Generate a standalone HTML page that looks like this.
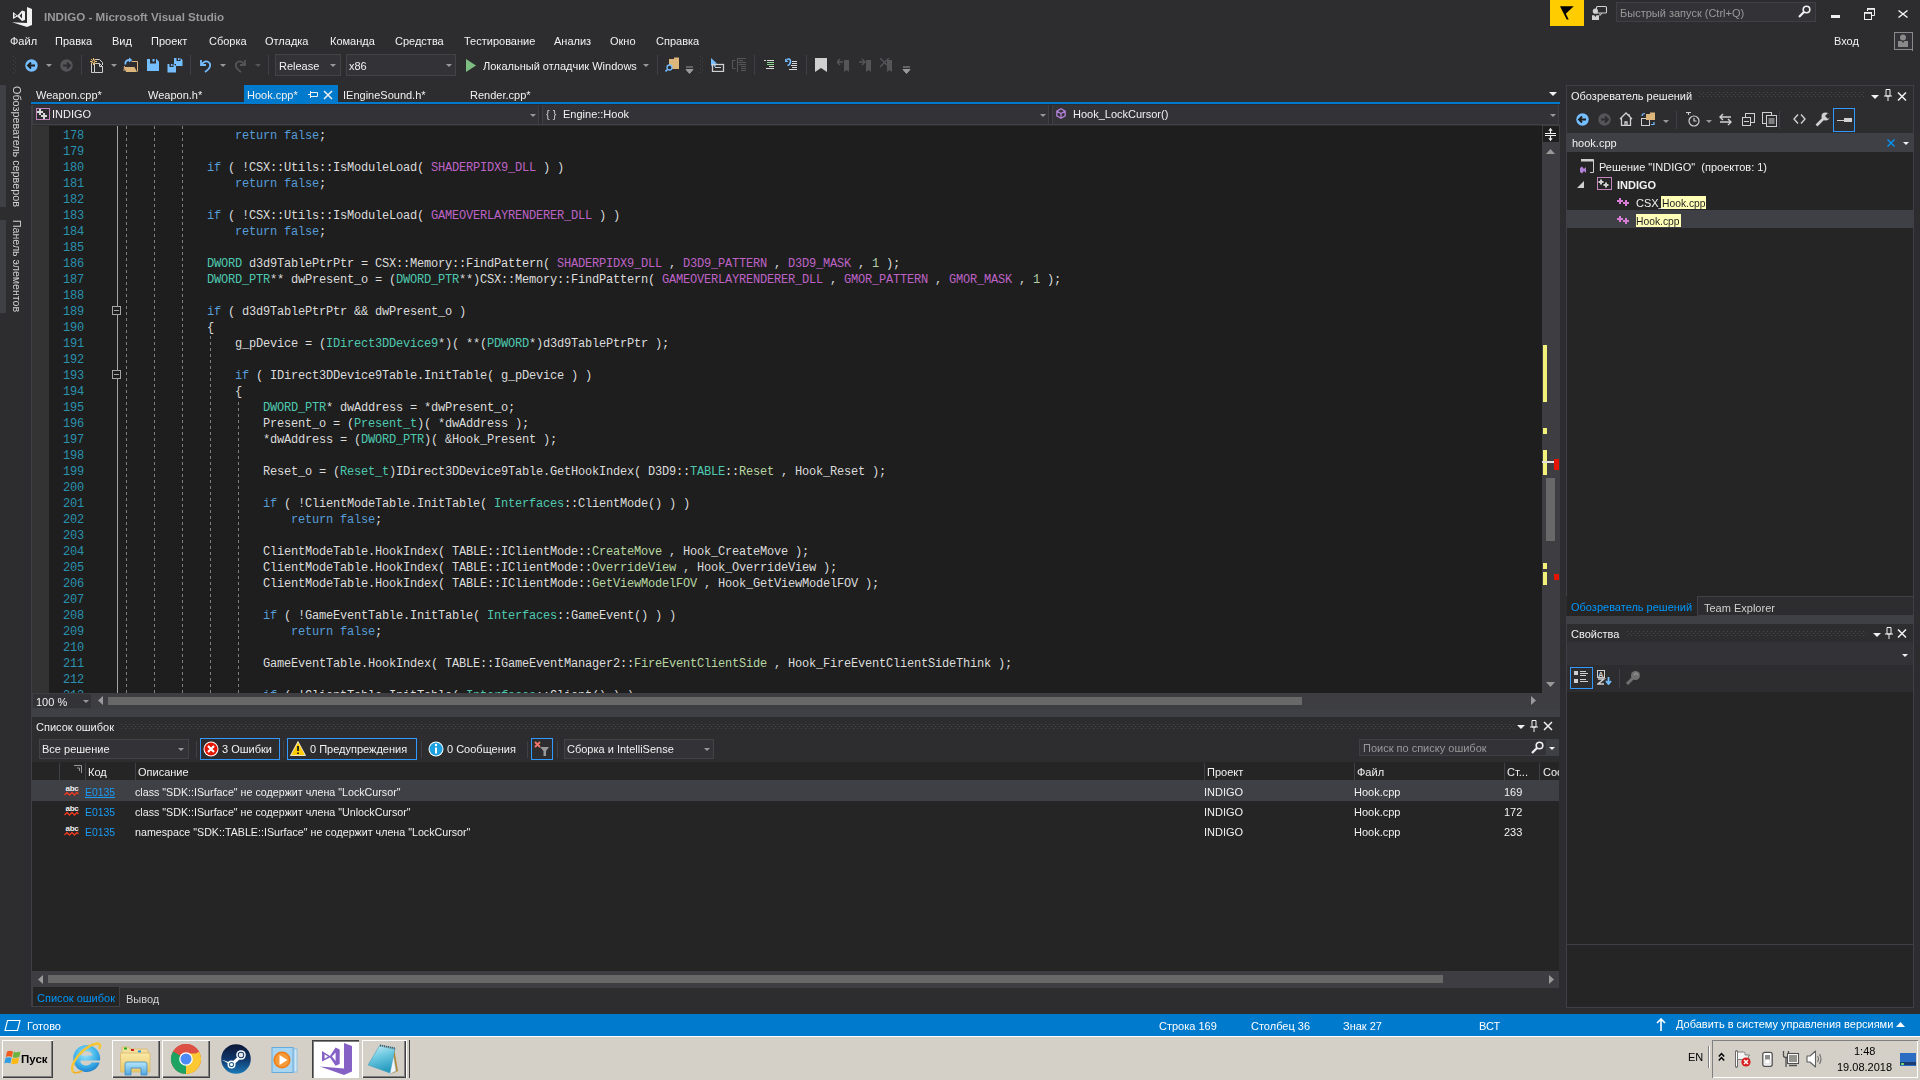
<!DOCTYPE html><html><head><meta charset="utf-8"><style>
html,body{margin:0;padding:0;width:1920px;height:1080px;overflow:hidden;background:#2D2D30;}
.a{position:absolute;}
.t{position:absolute;white-space:pre;line-height:13px;font-family:"Liberation Sans",sans-serif;will-change:transform;}
.grip{background-image:radial-gradient(circle at 1px 1px,#3C3C40 0.7px,transparent 0.8px);background-size:4px 4px;}
.code{position:absolute;left:123px;white-space:pre;font-family:"Liberation Mono",monospace;font-size:12px;letter-spacing:-0.2012px;line-height:16px;color:#DCDCDC;}
.ln{position:absolute;left:49px;width:35px;text-align:right;white-space:pre;font-family:"Liberation Mono",monospace;font-size:12px;letter-spacing:-0.2012px;line-height:16px;color:#2B91AF;}
.k{color:#569CD6}.ty{color:#4EC9B0}.m{color:#BD63C5}.en{color:#B8D7A3}.nu{color:#B5CEA8}
</style></head><body>
<svg class="a" style="left:12px;top:7px;" width="21" height="21" viewBox="0 0 21 21"><path d="M0 15.3L15 16V0L20 2V18L15 20Z" fill="#F1F1F1"/><path fill-rule="evenodd" d="M1 5L5.5 8.5L10 3.5L13 4.5V13L10 14L5.5 9.5L1 12Z M2.5 7L4.5 8.7L2.5 10Z M10 6L7.5 8.7L10 11.5Z" fill="#F1F1F1"/></svg><div class="t" style="left:44px;top:10px;color:#999999;font-size:11px;font-weight:bold;font-family:'Liberation Sans', sans-serif;font-size:11.6px;">INDIGO - Microsoft Visual Studio</div><div class="a" style="left:1550px;top:0px;width:34px;height:26px;background:#FFCC00;"></div><svg class="a" style="left:1558px;top:5px;" width="18" height="16" viewBox="0 0 18 16"><path d="M2 1.25H15.75L7.8 8.75L10.75 14.6H8.7Z" fill="#000000"/></svg><svg class="a" style="left:1591px;top:5px;" width="17" height="16" viewBox="0 0 17 16"><rect x="5.5" y="1.5" width="10" height="6.5" rx="1" fill="none" stroke="#D0D0D0" stroke-width="1.1"/><path d="M9 8V10.5L11 8" fill="#2D2D30" stroke="#D0D0D0" stroke-width="1"/><circle cx="4.4" cy="6.2" r="2.6" fill="#D0D0D0"/><path d="M1 10.2H3.3L4.4 12L5.5 10.2H8V15H1Z" fill="#D0D0D0"/></svg><div class="a" style="left:1616px;top:2px;width:200px;height:20px;background:#333337;box-shadow:inset 0 0 0 1px #3F3F46;"></div><div class="t" style="left:1620px;top:7px;color:#999999;font-size:11px;font-weight:normal;font-family:'Liberation Sans', sans-serif;">Быстрый запуск (Ctrl+Q)</div><svg class="a" style="left:1798px;top:5px;" width="13" height="13" viewBox="0 0 13 13"><circle cx="8.5" cy="4.5" r="3.3" fill="none" stroke="#F1F1F1" stroke-width="1.6"/><path d="M6.2 6.8L1 12" stroke="#F1F1F1" stroke-width="2.2"/></svg><div class="a" style="left:1831px;top:15px;width:9px;height:3px;background:#F1F1F1;"></div><svg class="a" style="left:1863px;top:8px;" width="13" height="12" viewBox="0 0 13 12"><path d="M4.5 3V0.5H11.5V7.5H8" fill="none" stroke="#F1F1F1"/><path d="M4 1H12" stroke="#F1F1F1" stroke-width="1.6"/><rect x="1.5" y="4.5" width="7" height="7" fill="none" stroke="#F1F1F1"/><path d="M1 5H9" stroke="#F1F1F1" stroke-width="1.6"/></svg><svg class="a" style="left:1898px;top:10px;" width="10" height="8" viewBox="0 0 10 8"><path d="M0.5 0.5L9.5 7.5M9.5 0.5L0.5 7.5" stroke="#F1F1F1" stroke-width="1.4"/></svg><div class="t" style="left:1834px;top:35px;color:#F1F1F1;font-size:11px;font-weight:normal;font-family:'Liberation Sans', sans-serif;">Вход</div><div class="a" style="left:1894px;top:32px;width:19px;height:18px;background:#333337;box-shadow:inset 0 0 0 1px #8A8A8A;"></div><div class="a" style="left:1912px;top:32px;width:1px;height:19px;background:#8A8A8A;"></div><svg class="a" style="left:1897px;top:34px;" width="13" height="14" viewBox="0 0 13 14"><circle cx="6" cy="3.5" r="3" fill="#8A8A8A"/><path d="M1 7H4.5L6 9L7.5 7H11V13H1Z" fill="#8A8A8A"/></svg><div class="t" style="left:10px;top:35px;color:#F1F1F1;font-size:11px;font-weight:normal;font-family:'Liberation Sans', sans-serif;">Файл</div><div class="t" style="left:55px;top:35px;color:#F1F1F1;font-size:11px;font-weight:normal;font-family:'Liberation Sans', sans-serif;">Правка</div><div class="t" style="left:112px;top:35px;color:#F1F1F1;font-size:11px;font-weight:normal;font-family:'Liberation Sans', sans-serif;">Вид</div><div class="t" style="left:151px;top:35px;color:#F1F1F1;font-size:11px;font-weight:normal;font-family:'Liberation Sans', sans-serif;">Проект</div><div class="t" style="left:209px;top:35px;color:#F1F1F1;font-size:11px;font-weight:normal;font-family:'Liberation Sans', sans-serif;">Сборка</div><div class="t" style="left:265px;top:35px;color:#F1F1F1;font-size:11px;font-weight:normal;font-family:'Liberation Sans', sans-serif;">Отладка</div><div class="t" style="left:330px;top:35px;color:#F1F1F1;font-size:11px;font-weight:normal;font-family:'Liberation Sans', sans-serif;">Команда</div><div class="t" style="left:395px;top:35px;color:#F1F1F1;font-size:11px;font-weight:normal;font-family:'Liberation Sans', sans-serif;">Средства</div><div class="t" style="left:464px;top:35px;color:#F1F1F1;font-size:11px;font-weight:normal;font-family:'Liberation Sans', sans-serif;">Тестирование</div><div class="t" style="left:554px;top:35px;color:#F1F1F1;font-size:11px;font-weight:normal;font-family:'Liberation Sans', sans-serif;">Анализ</div><div class="t" style="left:610px;top:35px;color:#F1F1F1;font-size:11px;font-weight:normal;font-family:'Liberation Sans', sans-serif;">Окно</div><div class="t" style="left:656px;top:35px;color:#F1F1F1;font-size:11px;font-weight:normal;font-family:'Liberation Sans', sans-serif;">Справка</div><svg class="a" style="left:13px;top:56px" width="4" height="17"><defs><pattern id="g1" width="4" height="4" patternUnits="userSpaceOnUse"><rect x="0" y="0" width="1" height="1" fill="#46464A"/><rect x="2" y="2" width="1" height="1" fill="#46464A"/></pattern></defs><rect width="4" height="17" fill="url(#g1)"/></svg><svg class="a" style="left:25px;top:59px;" width="13" height="13" viewBox="0 0 13 13"><circle cx="6.5" cy="6.5" r="6.2" fill="#75BEFF"/><path d="M3 6.5H10M6 3.5L3 6.5L6 9.5" stroke="#1E1E1E" stroke-width="1.8" fill="none"/></svg><svg class="a" style="left:46px;top:64px;" width="6" height="3" viewBox="0 0 6 3"><path d="M0 0H6L3.0 3Z" fill="#999999"/></svg><svg class="a" style="left:60px;top:59px;" width="13" height="13" viewBox="0 0 13 13"><circle cx="6.5" cy="6.5" r="6.2" fill="#555558"/><path d="M3 6.5H10M7 3.5L10 6.5L7 9.5" stroke="#2D2D30" stroke-width="1.8" fill="none"/></svg><div class="a" style="left:81px;top:55px;width:1px;height:20px;background:#3F3F46;"></div><svg class="a" style="left:89px;top:57px;" width="16" height="17" viewBox="0 0 16 17"><path d="M2.5 15.5V5.5M2.5 15.5H5" stroke="#D0D0D0" fill="none"/><path d="M5.5 2.5H10.5L13.5 5.5V8" stroke="#D0D0D0" fill="none"/><path d="M5.5 6.5H10.5L13.5 9.5V15.5H5.5Z" fill="#2D2D30" stroke="#D0D0D0"/><path d="M10.5 6.5V9.5H13.5" stroke="#D0D0D0" fill="none"/><path d="M4.5 1V8M1 4.5H8M2 2L7 7M7 2L2 7" stroke="#F0C070" stroke-width="1"/><circle cx="4.5" cy="4.5" r="1.4" fill="#2D2D30" stroke="#F0C070" stroke-width="0.9"/></svg><svg class="a" style="left:111px;top:64px;" width="6" height="3" viewBox="0 0 6 3"><path d="M0 0H6L3.0 3Z" fill="#999999"/></svg><svg class="a" style="left:123px;top:57px;" width="16" height="16" viewBox="0 0 16 16"><path d="M8.5 4.5H14.5V14.5" stroke="#DCB67A" fill="none"/><path d="M1 10H11.5L14 15H3Z" fill="#DCB67A"/><path d="M1.5 9L1 14" stroke="#DCB67A" stroke-width="1"/><path d="M2.5 7.5Q1.5 3 7 3" stroke="#75BEFF" stroke-width="1.8" fill="none"/><path d="M6 0.5L9.3 3L6 5.5Z" fill="#75BEFF"/></svg><svg class="a" style="left:147px;top:59px;" width="12" height="12" viewBox="0 0 12 12"><path d="M0 0H9.5L12 2.5V12H0Z" fill="#75BEFF"/><rect x="3" y="0" width="6" height="4.5" fill="#2D2D30"/><rect x="5.5" y="0" width="2" height="2.5" fill="#75BEFF"/></svg><svg class="a" style="left:167px;top:58px;" width="16" height="15" viewBox="0 0 16 15"><path d="M7 0H13.5L15.5 2V8H9V6H7Z" fill="#75BEFF"/><rect x="9.5" y="0" width="4" height="3" fill="#2D2D30"/><rect x="11" y="0" width="1.5" height="2" fill="#75BEFF"/><path d="M0.5 6H7L9 8V14.5H0.5Z" fill="#75BEFF"/><rect x="2.5" y="6" width="4" height="3" fill="#2D2D30"/><rect x="4" y="6" width="1.5" height="2" fill="#75BEFF"/></svg><div class="a" style="left:190px;top:55px;width:1px;height:20px;background:#3F3F46;"></div><svg class="a" style="left:198px;top:58px;" width="14" height="15" viewBox="0 0 14 15"><path d="M3 2V7H8" fill="none" stroke="#75BEFF" stroke-width="1.8"/><path d="M3.5 6.5Q8 1 11.5 5Q14 9 7 14" fill="none" stroke="#75BEFF" stroke-width="1.8"/></svg><svg class="a" style="left:220px;top:64px;" width="6" height="3" viewBox="0 0 6 3"><path d="M0 0H6L3.0 3Z" fill="#999999"/></svg><svg class="a" style="left:234px;top:58px;" width="14" height="15" viewBox="0 0 14 15"><path d="M11 2V7H6" fill="none" stroke="#555558" stroke-width="1.8"/><path d="M10.5 6.5Q6 1 2.5 5Q0 9 7 14" fill="none" stroke="#555558" stroke-width="1.8"/></svg><svg class="a" style="left:255px;top:64px;" width="6" height="3" viewBox="0 0 6 3"><path d="M0 0H6L3.0 3Z" fill="#555558"/></svg><div class="a" style="left:268px;top:55px;width:1px;height:20px;background:#3F3F46;"></div><div class="a" style="left:275px;top:54px;width:66px;height:22px;background:#333337;box-shadow:inset 0 0 0 1px #434346;"></div><div class="t" style="left:279px;top:60px;color:#F1F1F1;font-size:11px;font-weight:normal;font-family:'Liberation Sans', sans-serif;">Release</div><svg class="a" style="left:330px;top:64px;" width="6" height="3" viewBox="0 0 6 3"><path d="M0 0H6L3.0 3Z" fill="#999999"/></svg><div class="a" style="left:346px;top:54px;width:110px;height:22px;background:#333337;box-shadow:inset 0 0 0 1px #434346;"></div><div class="t" style="left:349px;top:60px;color:#F1F1F1;font-size:11px;font-weight:normal;font-family:'Liberation Sans', sans-serif;">x86</div><svg class="a" style="left:446px;top:64px;" width="6" height="3" viewBox="0 0 6 3"><path d="M0 0H6L3.0 3Z" fill="#999999"/></svg><svg class="a" style="left:466px;top:59px;" width="10" height="13" viewBox="0 0 10 13"><path d="M0 0L10 6.5L0 13Z" fill="#8CD790" fill-opacity="0.85"/></svg><div class="t" style="left:483px;top:60px;color:#F1F1F1;font-size:11px;font-weight:normal;font-family:'Liberation Sans', sans-serif;">Локальный отладчик Windows</div><svg class="a" style="left:643px;top:64px;" width="6" height="3" viewBox="0 0 6 3"><path d="M0 0H6L3.0 3Z" fill="#999999"/></svg><div class="a" style="left:657px;top:55px;width:1px;height:20px;background:#3F3F46;"></div><svg class="a" style="left:665px;top:57px;" width="15" height="16" viewBox="0 0 15 16"><path d="M4 2H9V0.5H14V12H4Z" fill="#DCB67A"/><circle cx="4.5" cy="10.5" r="2.5" fill="#2D2D30" stroke="#75BEFF" stroke-width="1.3"/><path d="M2.5 12.5L0.5 14.5" stroke="#75BEFF" stroke-width="1.6"/></svg><svg class="a" style="left:685px;top:66px;" width="9" height="9" viewBox="0 0 9 9"><path d="M1 1H8M1 3.5H8L4.5 7.5Z" stroke="#999999" fill="#999999" stroke-width="1"/></svg><svg class="a" style="left:700px;top:56px" width="4" height="17"><defs><pattern id="g2" width="4" height="4" patternUnits="userSpaceOnUse"><rect x="0" y="0" width="1" height="1" fill="#46464A"/><rect x="2" y="2" width="1" height="1" fill="#46464A"/></pattern></defs><rect width="4" height="17" fill="url(#g2)"/></svg><svg class="a" style="left:711px;top:58px;" width="14" height="14" viewBox="0 0 14 14"><path d="M0 0V8L2 6.5L3.5 9L5 8.2L3.8 5.8H6.2Z" fill="#75BEFF"/><rect x="1.5" y="6.5" width="11" height="7" fill="none" stroke="#D0D0D0" stroke-width="1.3"/><path d="M4 9.5H10" stroke="#D0D0D0"/></svg><svg class="a" style="left:732px;top:58px;" width="15" height="14" viewBox="0 0 15 14"><path d="M0 2.5H3.5M0.5 2V10.5H3.5M5.5 0V14M5 0.5H14M7 2.5H11M6 4.5H14M7 6.5H14M9 8.5H14M9 10.5H14M9 12.5H14" stroke="#555558" fill="none"/></svg><div class="a" style="left:754px;top:55px;width:1px;height:20px;background:#3F3F46;"></div><svg class="a" style="left:764px;top:60px;" width="11" height="9" viewBox="0 0 11 9"><path d="M0 0.5H2M3 0.5H10M5 6.5H10M2 8.5H10" stroke="#D8D8D8"/><path d="M3 2.5H10M3 4.5H10" stroke="#8CD790"/></svg><svg class="a" style="left:785px;top:58px;" width="13" height="12" viewBox="0 0 13 12"><path d="M1.5 1.5Q5.5 0 5.5 3.5Q5.5 6.5 2.5 7.5" stroke="#75BEFF" stroke-width="1.6" fill="none"/><path d="M0 0.5V4H3.5Z" fill="#75BEFF"/><path d="M7 3.5H12M7 5.5H12M6 7.5H12M7 9.5H12M4 11.5H12" stroke="#D8D8D8"/></svg><div class="a" style="left:806px;top:55px;width:1px;height:20px;background:#3F3F46;"></div><svg class="a" style="left:815px;top:58px;" width="12" height="14" viewBox="0 0 12 14"><path d="M0 0H12V14L6 10L0 14Z" fill="#D0D0D0"/></svg><svg class="a" style="left:837px;top:58px;" width="13" height="14" viewBox="0 0 13 14"><path d="M7 2H12V14L9.5 12L7 14Z" fill="#555558"/><path d="M0 4H6M3 1L0 4L3 7" stroke="#555558" stroke-width="1.4" fill="none"/></svg><svg class="a" style="left:859px;top:58px;" width="13" height="14" viewBox="0 0 13 14"><path d="M7 2H12V14L9.5 12L7 14Z" fill="#555558"/><path d="M0 4H6M3 1L6 4L3 7" stroke="#555558" stroke-width="1.4" fill="none"/></svg><svg class="a" style="left:880px;top:58px;" width="14" height="14" viewBox="0 0 14 14"><path d="M7 2H12V14L9.5 12L7 14Z" fill="#555558"/><path d="M0 0L9 9M9 0L0 9" stroke="#555558" stroke-width="1.4"/></svg><svg class="a" style="left:902px;top:66px;" width="9" height="9" viewBox="0 0 9 9"><path d="M1 1H8M1 3.5H8L4.5 7.5Z" stroke="#999999" fill="#999999" stroke-width="1"/></svg><div class="a" style="left:0px;top:85px;width:6px;height:122px;background:#3F3F46;"></div><div class="a" style="left:0px;top:220px;width:6px;height:93px;background:#3F3F46;"></div><div class="t" style="left:10px;top:86px;color:#D0D0D0;font-size:10.8px;writing-mode:vertical-rl;line-height:13px">Обозреватель серверов</div><div class="t" style="left:10px;top:220px;color:#D0D0D0;font-size:10.6px;writing-mode:vertical-rl;line-height:13px">Панель элементов</div><div class="a" style="left:31px;top:102px;width:1529px;height:2px;background:#007ACC;"></div><div class="t" style="left:36px;top:89px;color:#F1F1F1;font-size:11px;font-weight:normal;font-family:'Liberation Sans', sans-serif;">Weapon.cpp*</div><div class="t" style="left:148px;top:89px;color:#F1F1F1;font-size:11px;font-weight:normal;font-family:'Liberation Sans', sans-serif;">Weapon.h*</div><div class="a" style="left:244px;top:85px;width:94px;height:17px;background:#007ACC;"></div><div class="t" style="left:247px;top:89px;color:#F1F1F1;font-size:11px;font-weight:normal;font-family:'Liberation Sans', sans-serif;">Hook.cpp*</div><svg class="a" style="left:308px;top:91px;" width="10" height="7" viewBox="0 0 10 7"><path d="M0 3.5H2.5M2.5 0V7M2.5 1.5H9.5V5.5H2.5" stroke="#F1F1F1" fill="none"/></svg><svg class="a" style="left:323px;top:90px;" width="10" height="10" viewBox="0 0 10 10"><path d="M1 1L9 9M9 1L1 9" stroke="#F1F1F1" stroke-width="1.5"/></svg><div class="t" style="left:343px;top:89px;color:#F1F1F1;font-size:11px;font-weight:normal;font-family:'Liberation Sans', sans-serif;">IEngineSound.h*</div><div class="t" style="left:470px;top:89px;color:#F1F1F1;font-size:11px;font-weight:normal;font-family:'Liberation Sans', sans-serif;">Render.cpp*</div><svg class="a" style="left:1549px;top:92px;" width="8" height="4" viewBox="0 0 8 4"><path d="M0 0H8L4.0 4Z" fill="#F1F1F1"/></svg><div class="a" style="left:31px;top:104px;width:1529px;height:21px;background:#2D2D30;"></div><div class="a" style="left:33px;top:105px;width:506px;height:19px;background:#333337;"></div><div class="a" style="left:538px;top:105px;width:1px;height:19px;background:#3F3F46;"></div><div class="a" style="left:542px;top:105px;width:507px;height:19px;background:#333337;"></div><div class="a" style="left:542px;top:105px;width:1px;height:19px;background:#3F3F46;"></div><div class="a" style="left:1048px;top:105px;width:1px;height:19px;background:#3F3F46;"></div><div class="a" style="left:1052px;top:105px;width:507px;height:19px;background:#333337;"></div><div class="a" style="left:1052px;top:105px;width:1px;height:19px;background:#3F3F46;"></div><div class="a" style="left:1558px;top:105px;width:1px;height:19px;background:#3F3F46;"></div><div class="a" style="left:33px;top:124px;width:1526px;height:1px;background:#3F3F46;"></div><svg class="a" style="left:36px;top:108px;" width="14" height="12" viewBox="0 0 14 12"><rect x="0.5" y="0.5" width="13" height="11" fill="#2D2D30" stroke="#C586C0"/><path d="M4 1V7M1 4H7M8 5V11M5 8H11" stroke="#D8D8D8" stroke-width="2"/></svg><div class="t" style="left:52px;top:108px;color:#F1F1F1;font-size:11px;font-weight:normal;font-family:'Liberation Sans', sans-serif;">INDIGO</div><svg class="a" style="left:530px;top:114px;" width="6" height="3" viewBox="0 0 6 3"><path d="M0 0H6L3.0 3Z" fill="#999999"/></svg><div class="t" style="left:546px;top:108px;color:#D0D0D0;font-size:11px;font-weight:normal;font-family:'Liberation Sans', sans-serif;">{ }</div><div class="t" style="left:563px;top:108px;color:#F1F1F1;font-size:11px;font-weight:normal;font-family:'Liberation Sans', sans-serif;">Engine::Hook</div><svg class="a" style="left:1040px;top:114px;" width="6" height="3" viewBox="0 0 6 3"><path d="M0 0H6L3.0 3Z" fill="#999999"/></svg><svg class="a" style="left:1056px;top:108px;" width="10" height="11" viewBox="0 0 10 11"><path d="M5 0.8L9.2 3.1V7.9L5 10.2L0.8 7.9V3.1Z M0.8 3.1L5 5.5L9.2 3.1M5 5.5V10.2" fill="none" stroke="#B180D7" stroke-width="1.3"/></svg><div class="t" style="left:1073px;top:108px;color:#F1F1F1;font-size:11px;font-weight:normal;font-family:'Liberation Sans', sans-serif;">Hook_LockCursor()</div><svg class="a" style="left:1550px;top:114px;" width="6" height="3" viewBox="0 0 6 3"><path d="M0 0H6L3.0 3Z" fill="#999999"/></svg><div class="a" style="left:31px;top:125px;width:1511px;height:568px;background:#1E1E1E;"></div><div class="a" style="left:31px;top:125px;width:18px;height:568px;background:#333333;"></div><div class="a" style="left:31px;top:105px;width:2px;height:20px;background:#3F3F46;"></div><div class="a" style="left:117px;top:125px;width:1px;height:568px;background:#A5A5A5;"></div><div class="a" style="left:31px;top:125px;width:1511px;height:568px;overflow:hidden"><div class="a" style="left:95px;top:0px;width:1px;height:568px;background-image:linear-gradient(to bottom,#808080 0 3px,transparent 3px 6px);background-size:1px 6px;background-position:0 1px"></div><div class="a" style="left:123px;top:0px;width:1px;height:568px;background-image:linear-gradient(to bottom,#808080 0 3px,transparent 3px 6px);background-size:1px 6px;background-position:0 1px"></div><div class="a" style="left:151px;top:0px;width:1px;height:568px;background-image:linear-gradient(to bottom,#808080 0 3px,transparent 3px 6px);background-size:1px 6px;background-position:0 1px"></div><div class="a" style="left:179px;top:211px;width:1px;height:357px;background-image:linear-gradient(to bottom,#808080 0 3px,transparent 3px 6px);background-size:1px 6px;background-position:0 0px"></div><div class="a" style="left:207px;top:275px;width:1px;height:293px;background-image:linear-gradient(to bottom,#808080 0 3px,transparent 3px 6px);background-size:1px 6px;background-position:0 2px"></div><div class="ln" style="left:18px;top:3px">178</div><div class="code" style="left:204px;top:3px"><span class="k">return</span> <span class="k">false</span>;</div><div class="ln" style="left:18px;top:19px">179</div><div class="ln" style="left:18px;top:35px">180</div><div class="code" style="left:176px;top:35px"><span class="k">if</span> ( !CSX::Utils::IsModuleLoad( <span class="m">SHADERPIDX9_DLL</span> ) )</div><div class="ln" style="left:18px;top:51px">181</div><div class="code" style="left:204px;top:51px"><span class="k">return</span> <span class="k">false</span>;</div><div class="ln" style="left:18px;top:67px">182</div><div class="ln" style="left:18px;top:83px">183</div><div class="code" style="left:176px;top:83px"><span class="k">if</span> ( !CSX::Utils::IsModuleLoad( <span class="m">GAMEOVERLAYRENDERER_DLL</span> ) )</div><div class="ln" style="left:18px;top:99px">184</div><div class="code" style="left:204px;top:99px"><span class="k">return</span> <span class="k">false</span>;</div><div class="ln" style="left:18px;top:115px">185</div><div class="ln" style="left:18px;top:131px">186</div><div class="code" style="left:176px;top:131px"><span class="ty">DWORD</span> d3d9TablePtrPtr = CSX::Memory::FindPattern( <span class="m">SHADERPIDX9_DLL</span> , <span class="m">D3D9_PATTERN</span> , <span class="m">D3D9_MASK</span> , <span class="nu">1</span> );</div><div class="ln" style="left:18px;top:147px">187</div><div class="code" style="left:176px;top:147px"><span class="ty">DWORD_PTR</span>** dwPresent_o = (<span class="ty">DWORD_PTR</span>**)CSX::Memory::FindPattern( <span class="m">GAMEOVERLAYRENDERER_DLL</span> , <span class="m">GMOR_PATTERN</span> , <span class="m">GMOR_MASK</span> , <span class="nu">1</span> );</div><div class="ln" style="left:18px;top:163px">188</div><div class="ln" style="left:18px;top:179px">189</div><div class="code" style="left:176px;top:179px"><span class="k">if</span> ( d3d9TablePtrPtr &amp;&amp; dwPresent_o )</div><div class="ln" style="left:18px;top:195px">190</div><div class="code" style="left:176px;top:195px">{</div><div class="ln" style="left:18px;top:211px">191</div><div class="code" style="left:204px;top:211px">g_pDevice = (<span class="ty">IDirect3DDevice9</span>*)( **(<span class="ty">PDWORD</span>*)d3d9TablePtrPtr );</div><div class="ln" style="left:18px;top:227px">192</div><div class="ln" style="left:18px;top:243px">193</div><div class="code" style="left:204px;top:243px"><span class="k">if</span> ( IDirect3DDevice9Table.InitTable( g_pDevice ) )</div><div class="ln" style="left:18px;top:259px">194</div><div class="code" style="left:204px;top:259px">{</div><div class="ln" style="left:18px;top:275px">195</div><div class="code" style="left:232px;top:275px"><span class="ty">DWORD_PTR</span>* dwAddress = *dwPresent_o;</div><div class="ln" style="left:18px;top:291px">196</div><div class="code" style="left:232px;top:291px">Present_o = (<span class="ty">Present_t</span>)( *dwAddress );</div><div class="ln" style="left:18px;top:307px">197</div><div class="code" style="left:232px;top:307px">*dwAddress = (<span class="ty">DWORD_PTR</span>)( &amp;Hook_Present );</div><div class="ln" style="left:18px;top:323px">198</div><div class="ln" style="left:18px;top:339px">199</div><div class="code" style="left:232px;top:339px">Reset_o = (<span class="ty">Reset_t</span>)IDirect3DDevice9Table.GetHookIndex( D3D9::<span class="ty">TABLE</span>::<span class="en">Reset</span> , Hook_Reset );</div><div class="ln" style="left:18px;top:355px">200</div><div class="ln" style="left:18px;top:371px">201</div><div class="code" style="left:232px;top:371px"><span class="k">if</span> ( !ClientModeTable.InitTable( <span class="ty">Interfaces</span>::ClientMode() ) )</div><div class="ln" style="left:18px;top:387px">202</div><div class="code" style="left:260px;top:387px"><span class="k">return</span> <span class="k">false</span>;</div><div class="ln" style="left:18px;top:403px">203</div><div class="ln" style="left:18px;top:419px">204</div><div class="code" style="left:232px;top:419px">ClientModeTable.HookIndex( TABLE::IClientMode::<span class="en">CreateMove</span> , Hook_CreateMove );</div><div class="ln" style="left:18px;top:435px">205</div><div class="code" style="left:232px;top:435px">ClientModeTable.HookIndex( TABLE::IClientMode::<span class="en">OverrideView</span> , Hook_OverrideView );</div><div class="ln" style="left:18px;top:451px">206</div><div class="code" style="left:232px;top:451px">ClientModeTable.HookIndex( TABLE::IClientMode::<span class="en">GetViewModelFOV</span> , Hook_GetViewModelFOV );</div><div class="ln" style="left:18px;top:467px">207</div><div class="ln" style="left:18px;top:483px">208</div><div class="code" style="left:232px;top:483px"><span class="k">if</span> ( !GameEventTable.InitTable( <span class="ty">Interfaces</span>::GameEvent() ) )</div><div class="ln" style="left:18px;top:499px">209</div><div class="code" style="left:260px;top:499px"><span class="k">return</span> <span class="k">false</span>;</div><div class="ln" style="left:18px;top:515px">210</div><div class="ln" style="left:18px;top:531px">211</div><div class="code" style="left:232px;top:531px">GameEventTable.HookIndex( TABLE::IGameEventManager2::<span class="en">FireEventClientSide</span> , Hook_FireEventClientSideThink );</div><div class="ln" style="left:18px;top:547px">212</div><div class="ln" style="left:18px;top:563px">213</div><div class="code" style="left:232px;top:563px"><span class="k">if</span> ( !ClientTable.InitTable( <span class="ty">Interfaces</span>::Client() ) )</div><svg class="a" style="left:81px;top:181px" width="9" height="9"><rect x="0.5" y="0.5" width="8" height="8" fill="#1E1E1E" stroke="#A5A5A5"/><path d="M2 4.5H7" stroke="#A5A5A5"/></svg><svg class="a" style="left:81px;top:245px" width="9" height="9"><rect x="0.5" y="0.5" width="8" height="8" fill="#1E1E1E" stroke="#A5A5A5"/><path d="M2 4.5H7" stroke="#A5A5A5"/></svg></div><div class="a" style="left:33px;top:125px;width:1509px;height:1px;background:#2D2D30;"></div><div class="a" style="left:1542px;top:125px;width:18px;height:568px;background:#3E3E42;"></div><div class="a" style="left:1543px;top:126px;width:16px;height:16px;background:#1E1E1E;"></div><svg class="a" style="left:1544px;top:127px;" width="13" height="15" viewBox="0 0 13 15"><path d="M1 6.5H12M1 8.5H12M6.5 6V1.5M6.5 9V13.5" stroke="#F1F1F1" stroke-width="1.1" fill="none"/><path d="M4.3 3.8L6.5 1L8.7 3.8ZM4.3 11.2L6.5 14L8.7 11.2Z" fill="#F1F1F1"/></svg><svg class="a" style="left:1546px;top:149px;" width="9" height="5" viewBox="0 0 9 5"><path d="M0 5L4.5 0L9 5Z" fill="#999999"/></svg><svg class="a" style="left:1546px;top:682px;" width="9" height="5" viewBox="0 0 9 5"><path d="M0 0L4.5 5L9 0Z" fill="#999999"/></svg><div class="a" style="left:1543px;top:345px;width:4px;height:57px;background:#F2F27A;"></div><div class="a" style="left:1543px;top:428px;width:4px;height:6px;background:#F2F27A;"></div><div class="a" style="left:1543px;top:450px;width:4px;height:25px;background:#F2F27A;"></div><div class="a" style="left:1542px;top:461px;width:12px;height:2px;background:#E0E0E0;"></div><div class="a" style="left:1554px;top:459px;width:5px;height:11px;background:#E51400;"></div><div class="a" style="left:1546px;top:478px;width:9px;height:63px;background:#686868;"></div><div class="a" style="left:1543px;top:563px;width:4px;height:6px;background:#F2F27A;"></div><div class="a" style="left:1543px;top:572px;width:4px;height:13px;background:#F2F27A;"></div><div class="a" style="left:1554px;top:574px;width:5px;height:6px;background:#E51400;"></div><div class="a" style="left:31px;top:693px;width:1529px;height:16px;background:#3E3E42;"></div><div class="a" style="left:33px;top:694px;width:58px;height:14px;background:#333337;"></div><div class="t" style="left:36px;top:696px;color:#F1F1F1;font-size:11px;font-weight:normal;font-family:'Liberation Sans', sans-serif;">100 %</div><svg class="a" style="left:83px;top:700px;" width="6" height="3" viewBox="0 0 6 3"><path d="M0 0H6L3.0 3Z" fill="#999999"/></svg><svg class="a" style="left:98px;top:696px;" width="5" height="9" viewBox="0 0 5 9"><path d="M5 0L0 4.5L5 9Z" fill="#999999"/></svg><div class="a" style="left:108px;top:697px;width:1194px;height:8px;background:#686868;"></div><svg class="a" style="left:1531px;top:696px;" width="5" height="9" viewBox="0 0 5 9"><path d="M0 0L5 4.5L0 9Z" fill="#999999"/></svg><div class="a" style="left:32px;top:709px;width:1528px;height:8px;background:#3F3F46;"></div><div class="a" style="left:31px;top:717px;width:1528px;height:290px;background:#2D2D30;"></div><div class="t" style="left:36px;top:721px;color:#F1F1F1;font-size:11px;font-weight:normal;font-family:'Liberation Sans', sans-serif;">Список ошибок</div><svg class="a" style="left:121px;top:724px" width="1393" height="5"><defs><pattern id="g3" width="4" height="4" patternUnits="userSpaceOnUse"><rect x="0" y="0" width="1" height="1" fill="#46464A"/><rect x="2" y="2" width="1" height="1" fill="#46464A"/></pattern></defs><rect width="1393" height="5" fill="url(#g3)"/></svg><svg class="a" style="left:1517px;top:725px;" width="8" height="4" viewBox="0 0 8 4"><path d="M0 0H8L4.0 4Z" fill="#F1F1F1"/></svg><svg class="a" style="left:1530px;top:720px;" width="8" height="12" viewBox="0 0 8 12"><path d="M2 0.5H6V7H2Z M0 7H8M4 7V12" stroke="#F1F1F1" fill="none"/></svg><svg class="a" style="left:1543px;top:721px;" width="10" height="10" viewBox="0 0 10 10"><path d="M1 1L9 9M9 1L1 9" stroke="#F1F1F1" stroke-width="1.5"/></svg><div class="a" style="left:39px;top:739px;width:150px;height:20px;background:#333337;box-shadow:inset 0 0 0 1px #434346;"></div><div class="t" style="left:42px;top:743px;color:#F1F1F1;font-size:11px;font-weight:normal;font-family:'Liberation Sans', sans-serif;">Все решение</div><svg class="a" style="left:178px;top:748px;" width="6" height="3" viewBox="0 0 6 3"><path d="M0 0H6L3.0 3Z" fill="#999999"/></svg><div class="a" style="left:196px;top:741px;width:1px;height:17px;background:#3F3F46;"></div><div class="a" style="left:200px;top:738px;width:80px;height:22px;box-shadow:inset 0 0 0 1px #3399FF;"></div><svg class="a" style="left:203px;top:741px;" width="16" height="16" viewBox="0 0 16 16"><circle cx="8" cy="8" r="7.5" fill="#FFFFFF"/><circle cx="8" cy="8" r="6.5" fill="#E51400"/><path d="M5 5L11 11M11 5L5 11" stroke="#FFFFFF" stroke-width="2.2"/></svg><div class="t" style="left:222px;top:743px;color:#F1F1F1;font-size:11px;font-weight:normal;font-family:'Liberation Sans', sans-serif;">3 Ошибки</div><div class="a" style="left:283px;top:741px;width:1px;height:17px;background:#3F3F46;"></div><div class="a" style="left:287px;top:738px;width:130px;height:22px;box-shadow:inset 0 0 0 1px #3399FF;"></div><svg class="a" style="left:290px;top:741px;" width="16" height="15" viewBox="0 0 16 15"><path d="M8 0.5L15.5 14.5H0.5Z" fill="#FFCC00" stroke="#FFFFFF" stroke-width="0.8"/><path d="M8 5V10M8 11.5V13" stroke="#1E1E1E" stroke-width="1.8"/></svg><div class="t" style="left:310px;top:743px;color:#F1F1F1;font-size:11px;font-weight:normal;font-family:'Liberation Sans', sans-serif;">0 Предупреждения</div><div class="a" style="left:421px;top:741px;width:1px;height:17px;background:#3F3F46;"></div><svg class="a" style="left:428px;top:741px;" width="16" height="16" viewBox="0 0 16 16"><circle cx="8" cy="8" r="7.5" fill="#FFFFFF"/><circle cx="8" cy="8" r="6.5" fill="#1BA1E2"/><path d="M8 6.5V12.5" stroke="#FFFFFF" stroke-width="2"/><circle cx="8" cy="4" r="1.2" fill="#FFFFFF"/></svg><div class="t" style="left:447px;top:743px;color:#F1F1F1;font-size:11px;font-weight:normal;font-family:'Liberation Sans', sans-serif;">0 Сообщения</div><div class="a" style="left:527px;top:741px;width:1px;height:17px;background:#3F3F46;"></div><div class="a" style="left:531px;top:738px;width:22px;height:22px;box-shadow:inset 0 0 0 1px #3399FF;"></div><svg class="a" style="left:534px;top:741px;" width="17" height="16" viewBox="0 0 17 16"><path d="M1 1L6 6M6 1L1 6" stroke="#F77669" stroke-width="1.8"/><path d="M6 6H15L12 10V15H9.5V10Z" fill="#999999"/></svg><div class="a" style="left:557px;top:741px;width:1px;height:17px;background:#3F3F46;"></div><div class="a" style="left:564px;top:739px;width:150px;height:20px;background:#333337;box-shadow:inset 0 0 0 1px #434346;"></div><div class="t" style="left:567px;top:743px;color:#F1F1F1;font-size:11px;font-weight:normal;font-family:'Liberation Sans', sans-serif;">Сборка и IntelliSense</div><svg class="a" style="left:704px;top:748px;" width="6" height="3" viewBox="0 0 6 3"><path d="M0 0H6L3.0 3Z" fill="#999999"/></svg><div class="a" style="left:1359px;top:739px;width:188px;height:17px;background:#333337;box-shadow:inset 0 0 0 1px #3F3F46;"></div><div class="t" style="left:1363px;top:742px;color:#999999;font-size:11px;font-weight:normal;font-family:'Liberation Sans', sans-serif;">Поиск по списку ошибок</div><svg class="a" style="left:1531px;top:741px;" width="13" height="13" viewBox="0 0 13 13"><circle cx="8.5" cy="4.5" r="3.3" fill="none" stroke="#F1F1F1" stroke-width="1.6"/><path d="M6.2 6.8L1 12" stroke="#F1F1F1" stroke-width="2.2"/></svg><div class="a" style="left:1546px;top:739px;width:13px;height:17px;background:#3F3F46;"></div><svg class="a" style="left:1549px;top:747px;" width="6" height="3" viewBox="0 0 6 3"><path d="M0 0H6L3.0 3Z" fill="#F1F1F1"/></svg><div class="a" style="left:32px;top:762px;width:1527px;height:209px;background:#252526;"></div><div class="a" style="left:59px;top:763px;width:1px;height:17px;background:#3F3F46;"></div><div class="a" style="left:85px;top:763px;width:1px;height:17px;background:#3F3F46;"></div><div class="a" style="left:135px;top:763px;width:1px;height:17px;background:#3F3F46;"></div><div class="a" style="left:1204px;top:763px;width:1px;height:17px;background:#3F3F46;"></div><div class="a" style="left:1354px;top:763px;width:1px;height:17px;background:#3F3F46;"></div><div class="a" style="left:1504px;top:763px;width:1px;height:17px;background:#3F3F46;"></div><div class="a" style="left:1539px;top:763px;width:1px;height:17px;background:#3F3F46;"></div><svg class="a" style="left:74px;top:765px;" width="8" height="8" viewBox="0 0 8 8"><path d="M0 0.5H7.5V8M3 3H5.5V6" stroke="#999999" fill="none"/></svg><div class="t" style="left:88px;top:766px;color:#F1F1F1;font-size:11px;font-weight:normal;font-family:'Liberation Sans', sans-serif;">Код</div><div class="t" style="left:138px;top:766px;color:#F1F1F1;font-size:11px;font-weight:normal;font-family:'Liberation Sans', sans-serif;">Описание</div><div class="t" style="left:1207px;top:766px;color:#F1F1F1;font-size:11px;font-weight:normal;font-family:'Liberation Sans', sans-serif;">Проект</div><div class="t" style="left:1357px;top:766px;color:#F1F1F1;font-size:11px;font-weight:normal;font-family:'Liberation Sans', sans-serif;">Файл</div><div class="t" style="left:1507px;top:766px;color:#F1F1F1;font-size:11px;font-weight:normal;font-family:'Liberation Sans', sans-serif;">Ст...</div><div class="a" style="left:1540px;top:760px;width:19px;height:20px;overflow:hidden"><div class="t" style="left:3px;top:6px;color:#F1F1F1;font-size:11px;font-weight:normal;font-family:'Liberation Sans', sans-serif;">Сос</div></div><div class="a" style="left:32px;top:780px;width:1527px;height:21px;background:#3F3F46;"></div><svg class="a" style="left:64px;top:783px;" width="15" height="14" viewBox="0 0 15 14"><text x="1.5" y="7.5" font-family="Liberation Sans" font-size="8" font-weight="bold" fill="#F0F0F0" letter-spacing="-0.3">abc</text><path d="M0.5 12L3 9.5L5.5 12L8 9.5L10.5 12L13 9.5L14.5 11" stroke="#F03A1E" stroke-width="1.3" fill="none"/></svg><div class="t" style="left:85px;top:786px;color:#1A9CF5;font-size:11px;font-weight:normal;font-family:'Liberation Sans', sans-serif;font-size:10.4px;text-decoration:underline;">E0135</div><div class="t" style="left:135px;top:786px;color:#F1F1F1;font-size:11px;font-weight:normal;font-family:'Liberation Sans', sans-serif;font-size:10.7px;">class &quot;SDK::ISurface&quot; не содержит члена &quot;LockCursor&quot;</div><div class="t" style="left:1204px;top:786px;color:#F1F1F1;font-size:11px;font-weight:normal;font-family:'Liberation Sans', sans-serif;">INDIGO</div><div class="t" style="left:1354px;top:786px;color:#F1F1F1;font-size:11px;font-weight:normal;font-family:'Liberation Sans', sans-serif;">Hook.cpp</div><div class="t" style="left:1504px;top:786px;color:#F1F1F1;font-size:11px;font-weight:normal;font-family:'Liberation Sans', sans-serif;">169</div><svg class="a" style="left:64px;top:803px;" width="15" height="14" viewBox="0 0 15 14"><text x="1.5" y="7.5" font-family="Liberation Sans" font-size="8" font-weight="bold" fill="#F0F0F0" letter-spacing="-0.3">abc</text><path d="M0.5 12L3 9.5L5.5 12L8 9.5L10.5 12L13 9.5L14.5 11" stroke="#F03A1E" stroke-width="1.3" fill="none"/></svg><div class="t" style="left:85px;top:806px;color:#1A9CF5;font-size:11px;font-weight:normal;font-family:'Liberation Sans', sans-serif;font-size:10.4px;">E0135</div><div class="t" style="left:135px;top:806px;color:#F1F1F1;font-size:11px;font-weight:normal;font-family:'Liberation Sans', sans-serif;font-size:10.7px;">class &quot;SDK::ISurface&quot; не содержит члена &quot;UnlockCursor&quot;</div><div class="t" style="left:1204px;top:806px;color:#F1F1F1;font-size:11px;font-weight:normal;font-family:'Liberation Sans', sans-serif;">INDIGO</div><div class="t" style="left:1354px;top:806px;color:#F1F1F1;font-size:11px;font-weight:normal;font-family:'Liberation Sans', sans-serif;">Hook.cpp</div><div class="t" style="left:1504px;top:806px;color:#F1F1F1;font-size:11px;font-weight:normal;font-family:'Liberation Sans', sans-serif;">172</div><svg class="a" style="left:64px;top:823px;" width="15" height="14" viewBox="0 0 15 14"><text x="1.5" y="7.5" font-family="Liberation Sans" font-size="8" font-weight="bold" fill="#F0F0F0" letter-spacing="-0.3">abc</text><path d="M0.5 12L3 9.5L5.5 12L8 9.5L10.5 12L13 9.5L14.5 11" stroke="#F03A1E" stroke-width="1.3" fill="none"/></svg><div class="t" style="left:85px;top:826px;color:#1A9CF5;font-size:11px;font-weight:normal;font-family:'Liberation Sans', sans-serif;font-size:10.4px;">E0135</div><div class="t" style="left:135px;top:826px;color:#F1F1F1;font-size:11px;font-weight:normal;font-family:'Liberation Sans', sans-serif;font-size:10.7px;">namespace &quot;SDK::TABLE::ISurface&quot; не содержит члена &quot;LockCursor&quot;</div><div class="t" style="left:1204px;top:826px;color:#F1F1F1;font-size:11px;font-weight:normal;font-family:'Liberation Sans', sans-serif;">INDIGO</div><div class="t" style="left:1354px;top:826px;color:#F1F1F1;font-size:11px;font-weight:normal;font-family:'Liberation Sans', sans-serif;">Hook.cpp</div><div class="t" style="left:1504px;top:826px;color:#F1F1F1;font-size:11px;font-weight:normal;font-family:'Liberation Sans', sans-serif;">233</div><div class="a" style="left:32px;top:971px;width:1527px;height:17px;background:#3E3E42;"></div><svg class="a" style="left:38px;top:975px;" width="5" height="9" viewBox="0 0 5 9"><path d="M5 0L0 4.5L5 9Z" fill="#999999"/></svg><div class="a" style="left:48px;top:975px;width:1395px;height:8px;background:#686868;"></div><svg class="a" style="left:1549px;top:975px;" width="5" height="9" viewBox="0 0 5 9"><path d="M0 0L5 4.5L0 9Z" fill="#999999"/></svg><div class="a" style="left:32px;top:987px;width:88px;height:20px;background:#252526;box-shadow:inset 0 0 0 1px #3F3F46;"></div><div class="a" style="left:33px;top:987px;width:86px;height:1px;background:#252526;"></div><div class="t" style="left:37px;top:992px;color:#0097FB;font-size:11px;font-weight:normal;font-family:'Liberation Sans', sans-serif;">Список ошибок</div><div class="t" style="left:126px;top:993px;color:#D0D0D0;font-size:11px;font-weight:normal;font-family:'Liberation Sans', sans-serif;">Вывод</div><div class="a" style="left:1566px;top:85px;width:348px;height:531px;background:#2D2D30;box-shadow:inset 0 0 0 1px #3F3F46;"></div><div class="t" style="left:1571px;top:90px;color:#F1F1F1;font-size:11px;font-weight:normal;font-family:'Liberation Sans', sans-serif;">Обозреватель решений</div><svg class="a" style="left:1699px;top:92px" width="166" height="5"><defs><pattern id="g4" width="4" height="4" patternUnits="userSpaceOnUse"><rect x="0" y="0" width="1" height="1" fill="#46464A"/><rect x="2" y="2" width="1" height="1" fill="#46464A"/></pattern></defs><rect width="166" height="5" fill="url(#g4)"/></svg><svg class="a" style="left:1871px;top:95px;" width="8" height="4" viewBox="0 0 8 4"><path d="M0 0H8L4.0 4Z" fill="#F1F1F1"/></svg><svg class="a" style="left:1884px;top:89px;" width="8" height="12" viewBox="0 0 8 12"><path d="M2 0.5H6V7H2Z M0 7H8M4 7V12" stroke="#F1F1F1" fill="none"/></svg><svg class="a" style="left:1897px;top:92px;" width="10" height="9" viewBox="0 0 10 9"><path d="M1 0.5L9 8.5M9 0.5L1 8.5" stroke="#F1F1F1" stroke-width="1.5"/></svg><svg class="a" style="left:1576px;top:113px;" width="13" height="13" viewBox="0 0 13 13"><circle cx="6.5" cy="6.5" r="6.2" fill="#75BEFF"/><path d="M3 6.5H10M6 3.5L3 6.5L6 9.5" stroke="#1E1E1E" stroke-width="1.8" fill="none"/></svg><svg class="a" style="left:1598px;top:113px;" width="13" height="13" viewBox="0 0 13 13"><circle cx="6.5" cy="6.5" r="6.2" fill="#555558"/><path d="M3 6.5H10M7 3.5L10 6.5L7 9.5" stroke="#2D2D30" stroke-width="1.8" fill="none"/></svg><svg class="a" style="left:1619px;top:112px;" width="14" height="14" viewBox="0 0 14 14"><path d="M1 7L7 1L13 7M2.5 6V13.5H11.5V6M6 13.5V10H8V13.5" stroke="#D0D0D0" stroke-width="1.3" fill="none"/><path d="M10 2V4" stroke="#D0D0D0" stroke-width="1.3"/></svg><svg class="a" style="left:1641px;top:112px;" width="15" height="14" viewBox="0 0 15 14"><rect x="0.5" y="6.5" width="8" height="7" fill="none" stroke="#D0D0D0"/><path d="M5 2H9V0.5H14V8H5Z" fill="#DCB67A"/><path d="M1 4Q1 1.5 4 1.5" stroke="#75BEFF" fill="none" stroke-width="1.2"/><path d="M13 10V12.5H10" stroke="#75BEFF" fill="none" stroke-width="1.2"/></svg><svg class="a" style="left:1663px;top:120px;" width="6" height="3" viewBox="0 0 6 3"><path d="M0 0H6L3.0 3Z" fill="#999999"/></svg><div class="a" style="left:1676px;top:111px;width:1px;height:18px;background:#3F3F46;"></div><svg class="a" style="left:1686px;top:112px;" width="14" height="15" viewBox="0 0 14 15"><path d="M0 0.5H5M2.5 0.5V3" stroke="#D0D0D0" stroke-width="1.2"/><circle cx="8" cy="9" r="5" fill="none" stroke="#D0D0D0" stroke-width="1.2"/><path d="M8 6V9H10.5" stroke="#D0D0D0" stroke-width="1.2" fill="none"/></svg><svg class="a" style="left:1706px;top:120px;" width="6" height="3" viewBox="0 0 6 3"><path d="M0 0H6L3.0 3Z" fill="#999999"/></svg><svg class="a" style="left:1719px;top:113px;" width="13" height="13" viewBox="0 0 13 13"><path d="M1 4H12M4 1L1 4L4 7M1 9H12M9 6L12 9L9 12" stroke="#D0D0D0" stroke-width="1.4" fill="none"/></svg><svg class="a" style="left:1742px;top:113px;" width="13" height="13" viewBox="0 0 13 13"><rect x="3.5" y="0.5" width="9" height="9" fill="none" stroke="#D0D0D0"/><rect x="0.5" y="4.5" width="8" height="8" fill="#2D2D30" stroke="#D0D0D0"/><path d="M2 8.5H7" stroke="#D0D0D0"/></svg><svg class="a" style="left:1762px;top:112px;" width="15" height="15" viewBox="0 0 15 15"><rect x="0.5" y="0.5" width="9" height="11" fill="none" stroke="#D0D0D0"/><rect x="4.5" y="3.5" width="10" height="11" fill="#2D2D30" stroke="#D0D0D0"/><path d="M6.5 7H12.5M6.5 9H12.5M6.5 11H12.5" stroke="#D0D0D0"/></svg><div class="a" style="left:1779px;top:111px;width:1px;height:18px;background:#3F3F46;"></div><svg class="a" style="left:1793px;top:114px;" width="13" height="10" viewBox="0 0 13 10"><path d="M5 0.5L1 5L5 9.5M8 0.5L12 5L8 9.5" stroke="#D0D0D0" stroke-width="1.4" fill="none"/></svg><svg class="a" style="left:1815px;top:112px;" width="15" height="15" viewBox="0 0 15 15"><path d="M1.5 13.5L8 7" stroke="#D0D0D0" stroke-width="2.6"/><circle cx="10.5" cy="4.5" r="4" fill="#D0D0D0"/><path d="M10 4L13 1L16 4L13 7Z" fill="#2D2D30"/></svg><div class="a" style="left:1833px;top:108px;width:22px;height:24px;box-shadow:inset 0 0 0 1px #3399FF;"></div><div class="a" style="left:1837px;top:120px;width:7px;height:1px;background:#D0D0D0;"></div><div class="a" style="left:1844px;top:118px;width:8px;height:4px;background:#D0D0D0;"></div><div class="a" style="left:1567px;top:133px;width:346px;height:19px;background:#3F3F46;"></div><div class="t" style="left:1572px;top:137px;color:#F1F1F1;font-size:11px;font-weight:normal;font-family:'Liberation Sans', sans-serif;">hook.cpp</div><svg class="a" style="left:1887px;top:139px;" width="8" height="8" viewBox="0 0 8 8"><path d="M0.5 0.5L7.5 7.5M7.5 0.5L0.5 7.5" stroke="#0097FB" stroke-width="1.4"/></svg><svg class="a" style="left:1903px;top:142px;" width="6" height="3" viewBox="0 0 6 3"><path d="M0 0H6L3.0 3Z" fill="#F1F1F1"/></svg><div class="a" style="left:1567px;top:152px;width:346px;height:444px;background:#252526;"></div><svg class="a" style="left:1580px;top:159px;" width="14" height="15" viewBox="0 0 14 15"><path d="M1 0.5H13.5V13.5H10" stroke="#D0D0D0" fill="none"/><path d="M1 0.5H13.5V2.5H1Z" fill="#D0D0D0"/><path d="M0 9L2 7.5L4 10L6 8V14L4 12L2 14.5L0 13Z" fill="#B180D7"/></svg><div class="t" style="left:1599px;top:161px;color:#F1F1F1;font-size:11px;font-weight:normal;font-family:'Liberation Sans', sans-serif;">Решение &quot;INDIGO&quot;  (проектов: 1)</div><svg class="a" style="left:1577px;top:181px;" width="8" height="8" viewBox="0 0 8 8"><path d="M7 0V7H0Z" fill="#D0D0D0"/></svg><svg class="a" style="left:1597px;top:177px;" width="15" height="13" viewBox="0 0 15 13"><rect x="0.5" y="0.5" width="14" height="12" fill="none" stroke="#C586C0"/><path d="M3 2.5H5V4H6.5V6H5V7.5H3V6H1.5V4H3Z M8 5.5H10V7H11.5V9H10V10.5H8V9H6.5V7H8Z" fill="#D0D0D0"/></svg><div class="t" style="left:1617px;top:179px;color:#F1F1F1;font-size:11px;font-weight:bold;font-family:'Liberation Sans', sans-serif;">INDIGO</div><div class="a" style="left:1567px;top:210px;width:346px;height:18px;background:#3F3F46;"></div><div class="a" style="left:1619px;top:198px;width:2px;height:6px;background:#D77DD7;"></div><div class="a" style="left:1617px;top:200px;width:6px;height:2px;background:#D77DD7;"></div><div class="a" style="left:1625px;top:200px;width:2px;height:6px;background:#D77DD7;"></div><div class="a" style="left:1623px;top:202px;width:6px;height:2px;background:#D77DD7;"></div><div class="a" style="left:1661px;top:196px;width:45px;height:13px;background:#FFFFB8;"></div><div class="t" style="left:1636px;top:197px;color:#F1F1F1;font-size:11px;font-weight:normal;font-family:'Liberation Sans', sans-serif;">CSX_</div><div class="t" style="left:1662px;top:197px;color:#1E1E1E;font-size:11px;font-weight:normal;font-family:'Liberation Sans', sans-serif;font-size:10.3px;">Hook.cpp</div><div class="a" style="left:1619px;top:216px;width:2px;height:6px;background:#D77DD7;"></div><div class="a" style="left:1617px;top:218px;width:6px;height:2px;background:#D77DD7;"></div><div class="a" style="left:1625px;top:218px;width:2px;height:6px;background:#D77DD7;"></div><div class="a" style="left:1623px;top:220px;width:6px;height:2px;background:#D77DD7;"></div><div class="a" style="left:1636px;top:214px;width:45px;height:13px;background:#FFFFB8;"></div><div class="t" style="left:1636px;top:215px;color:#1E1E1E;font-size:11px;font-weight:normal;font-family:'Liberation Sans', sans-serif;font-size:10.3px;">Hook.cpp</div><div class="a" style="left:1566px;top:596px;width:348px;height:20px;background:#2D2D30;"></div><div class="a" style="left:1567px;top:596px;width:130px;height:20px;background:#252526;"></div><div class="a" style="left:1697px;top:596px;width:217px;height:20px;background:#2D2D30;box-shadow:inset 0 0 0 1px #3F3F46;"></div><div class="t" style="left:1571px;top:601px;color:#0097FB;font-size:11px;font-weight:normal;font-family:'Liberation Sans', sans-serif;">Обозреватель решений</div><div class="t" style="left:1704px;top:602px;color:#D0D0D0;font-size:11px;font-weight:normal;font-family:'Liberation Sans', sans-serif;">Team Explorer</div><div class="a" style="left:1566px;top:616px;width:348px;height:8px;background:#3F3F46;"></div><div class="a" style="left:1566px;top:624px;width:348px;height:384px;background:#252526;box-shadow:inset 0 0 0 1px #3F3F46;"></div><div class="a" style="left:1567px;top:624px;width:346px;height:18px;background:#2D2D30;"></div><div class="t" style="left:1571px;top:628px;color:#F1F1F1;font-size:11px;font-weight:normal;font-family:'Liberation Sans', sans-serif;">Свойства</div><svg class="a" style="left:1627px;top:631px" width="240" height="5"><defs><pattern id="g5" width="4" height="4" patternUnits="userSpaceOnUse"><rect x="0" y="0" width="1" height="1" fill="#46464A"/><rect x="2" y="2" width="1" height="1" fill="#46464A"/></pattern></defs><rect width="240" height="5" fill="url(#g5)"/></svg><svg class="a" style="left:1873px;top:633px;" width="8" height="4" viewBox="0 0 8 4"><path d="M0 0H8L4.0 4Z" fill="#F1F1F1"/></svg><svg class="a" style="left:1885px;top:627px;" width="8" height="12" viewBox="0 0 8 12"><path d="M2 0.5H6V7H2Z M0 7H8M4 7V12" stroke="#F1F1F1" fill="none"/></svg><svg class="a" style="left:1897px;top:629px;" width="10" height="9" viewBox="0 0 10 9"><path d="M1 0.5L9 8.5M9 0.5L1 8.5" stroke="#F1F1F1" stroke-width="1.5"/></svg><div class="a" style="left:1567px;top:642px;width:346px;height:23px;background:#333337;"></div><svg class="a" style="left:1902px;top:654px;" width="6" height="3" viewBox="0 0 6 3"><path d="M0 0H6L3.0 3Z" fill="#F1F1F1"/></svg><div class="a" style="left:1567px;top:665px;width:346px;height:27px;background:#2D2D30;"></div><div class="a" style="left:1570px;top:667px;width:23px;height:22px;box-shadow:inset 0 0 0 1px #3399FF;"></div><svg class="a" style="left:1574px;top:671px;" width="15" height="14" viewBox="0 0 15 14"><rect x="0" y="0" width="4" height="4" fill="#D0D0D0"/><rect x="0" y="8" width="4" height="4" fill="#D0D0D0"/><path d="M6 0.5H12M6 2.5H14M6 4.5H12M6 8.5H12M6 10.5H14" stroke="#D0D0D0"/></svg><svg class="a" style="left:1597px;top:670px;" width="15" height="15" viewBox="0 0 15 15"><rect x="0.5" y="0.5" width="7" height="7" fill="none" stroke="#D0D0D0"/><text x="1.3" y="7" font-size="7" font-family="Liberation Sans" font-weight="bold" fill="#D0D0D0">A</text><path d="M1 9H7L1 14H7" stroke="#D0D0D0" stroke-width="1.5" fill="none"/><path d="M11.5 7V14M9 11L11.5 14L14 11" stroke="#75BEFF" stroke-width="1.8" fill="none"/></svg><div class="a" style="left:1619px;top:669px;width:1px;height:19px;background:#3F3F46;"></div><svg class="a" style="left:1625px;top:670px;" width="16" height="16" viewBox="0 0 16 16"><path d="M2 14L8 8" stroke="#707070" stroke-width="3"/><circle cx="10.5" cy="5.5" r="4.5" fill="#707070"/><path d="M9 5L11 3L13 5" stroke="#909090" stroke-width="1.2" fill="none"/></svg><div class="a" style="left:1567px;top:944px;width:346px;height:1px;background:#3F3F46;"></div><div class="a" style="left:31px;top:105px;width:1px;height:902px;background:#3F3F46;"></div><div class="a" style="left:0px;top:1014px;width:1920px;height:22px;background:#007ACC;"></div><svg class="a" style="left:4px;top:1020px;" width="17" height="11" viewBox="0 0 17 11"><path d="M3.5 0.5H16L13.5 10.5H1Z" fill="none" stroke="#FFFFFF" stroke-width="1.1"/></svg><div class="t" style="left:27px;top:1020px;color:#FFFFFF;font-size:11px;font-weight:normal;font-family:'Liberation Sans', sans-serif;">Готово</div><div class="t" style="left:1159px;top:1020px;color:#FFFFFF;font-size:11px;font-weight:normal;font-family:'Liberation Sans', sans-serif;">Строка 169</div><div class="t" style="left:1251px;top:1020px;color:#FFFFFF;font-size:11px;font-weight:normal;font-family:'Liberation Sans', sans-serif;">Столбец 36</div><div class="t" style="left:1343px;top:1020px;color:#FFFFFF;font-size:11px;font-weight:normal;font-family:'Liberation Sans', sans-serif;">Знак 27</div><div class="t" style="left:1479px;top:1020px;color:#FFFFFF;font-size:11px;font-weight:normal;font-family:'Liberation Sans', sans-serif;">ВСТ</div><svg class="a" style="left:1656px;top:1018px;" width="10" height="13" viewBox="0 0 10 13"><path d="M5 1V13M1 5L5 1L9 5" stroke="#FFFFFF" stroke-width="1.6" fill="none"/></svg><div class="t" style="left:1676px;top:1018px;color:#FFFFFF;font-size:11px;font-weight:normal;font-family:'Liberation Sans', sans-serif;">Добавить в систему управления версиями</div><svg class="a" style="left:1896px;top:1022px;" width="9" height="5" viewBox="0 0 9 5"><path d="M0 5L4.5 0L9 5Z" fill="#FFFFFF"/></svg><div class="a" style="left:0px;top:1036px;width:1920px;height:44px;background:#D4D0C8;"></div><div class="a" style="left:0px;top:1036px;width:1920px;height:1px;background:#FFFFFF;"></div><div class="a" style="left:2px;top:1040px;width:51px;height:38px;background:#D4D0C8;box-shadow:inset 1px 1px 0 #FFFFFF,inset -1px -1px 0 #404040,inset -2px -2px 0 #808080"></div><svg class="a" style="left:4px;top:1050px;" width="17" height="15" viewBox="0 0 17 15"><path d="M3 1.5Q5.5 0 9 1.5L7.8 7Q4.5 5.7 1.8 7Z" fill="#F25A1E"/><path d="M9.8 1.7Q13 3 16.5 1.5L15.3 7Q12 8.3 8.6 7.2Z" fill="#6DB33F"/><path d="M1.6 7.8Q4.5 6.5 7.6 7.8L6.4 13.3Q3.2 12 0.4 13.3Z" fill="#2F9DE0"/><path d="M8.4 8Q11.8 9.2 15.1 7.8L13.9 13.3Q10.6 14.6 7.2 13.4Z" fill="#FDB813"/></svg><div class="t" style="left:21px;top:1053px;color:#000000;font-size:11px;font-weight:bold;font-family:'Liberation Sans', sans-serif;font-size:11.5px;">Пуск</div><svg class="a" style="left:70px;top:1042px;" width="33" height="33" viewBox="0 0 33 33"><defs><radialGradient id="ieg" cx="0.45" cy="0.35" r="0.7"><stop offset="0" stop-color="#9BE3FA"/><stop offset="0.6" stop-color="#3DB2EA"/><stop offset="1" stop-color="#1B78C8"/></radialGradient></defs><path fill-rule="evenodd" fill="url(#ieg)" d="M16.5 3A13.5 13.5 0 1 0 29.6 20.5H21.5A6.5 6.5 0 0 1 10.5 20.5V18.5H30A13.5 13.5 0 0 0 16.5 3Z M11 13.5A6 6 0 0 1 22.5 13.5Z"/><path d="M3 30Q0 24 8 14Q17 3 27 1.5Q32 1.5 29 7" fill="none" stroke="#F7C532" stroke-width="2.4"/><path d="M3 30Q6 32 12 29" fill="none" stroke="#F2B01E" stroke-width="1.6"/></svg><div class="a" style="left:112px;top:1040px;width:48px;height:38px;background:#D4D0C8;box-shadow:inset 1px 1px 0 #FFFFFF,inset -1px -1px 0 #404040,inset -2px -2px 0 #808080"></div><svg class="a" style="left:119px;top:1045px;" width="33" height="31" viewBox="0 0 33 31"><defs><linearGradient id="fdg" x1="0" y1="0" x2="0" y2="1"><stop offset="0" stop-color="#FBE9A6"/><stop offset="1" stop-color="#E8C66A"/></linearGradient><linearGradient id="arg" x1="0" y1="0" x2="0" y2="1"><stop offset="0" stop-color="#B8E6FA"/><stop offset="1" stop-color="#4FA6DE"/></linearGradient></defs><path d="M3 2H10L11 4H28L29 6V9H3Z" fill="#F2DFA0" stroke="#D9B868" stroke-width="0.8"/><rect x="5" y="2.5" width="3" height="2" fill="#20B020"/><rect x="12" y="4" width="3" height="2" fill="#D02020"/><rect x="19" y="5.5" width="3" height="2" fill="#2090E0"/><path d="M1.5 8H31V27H1.5Z" fill="url(#fdg)" stroke="#D9B868" stroke-width="0.8"/><path d="M6 30V19Q6 17 8 17H26Q28 17 28 19V30H22V23H12V30Z" fill="url(#arg)" stroke="#3C8CC8" stroke-width="0.8"/></svg><div class="a" style="left:162px;top:1040px;width:48px;height:38px;background:#D4D0C8;box-shadow:inset 1px 1px 0 #FFFFFF,inset -1px -1px 0 #404040,inset -2px -2px 0 #808080"></div><svg class="a" style="left:170px;top:1043px;" width="32" height="32" viewBox="0 0 32 32"><circle cx="16" cy="16" r="15" fill="#DB4437"/><path d="M16 16L29 8.5A15 15 0 0 1 16 31Z" fill="#FCC934"/><path d="M16 16L16 31A15 15 0 0 1 3 8.5Z" fill="#1DA462"/><path d="M16 16L3 8.5A15 15 0 0 1 29 8.5Z" fill="#DD5144"/><path d="M16 10.5H29L16 16Z" fill="#FCC934"/><path d="M10.5 17.5L3 8.5L16 16Z" fill="#1DA462"/><path d="M19 21L16 31L16 16Z" fill="#FCC934"/><circle cx="16" cy="16" r="6.8" fill="#FFFFFF"/><circle cx="16" cy="16" r="5.5" fill="#4C8BF5"/></svg><svg class="a" style="left:221px;top:1044px;" width="30" height="30" viewBox="0 0 30 30"><defs><linearGradient id="st" x1="0" y1="0" x2="0" y2="1"><stop offset="0" stop-color="#0B1634"/><stop offset="0.5" stop-color="#10366A"/><stop offset="1" stop-color="#1A7AB8"/></linearGradient></defs><circle cx="15" cy="15" r="14.8" fill="url(#st)"/><circle cx="20" cy="11" r="4.8" fill="#FFFFFF"/><circle cx="20" cy="11" r="3.3" fill="#10366A"/><circle cx="20" cy="11" r="2.3" fill="#E8E8E8"/><path d="M0.5 15.5L10 19L17 12.5L19 15L11.5 22Z" fill="#FFFFFF"/><circle cx="10.5" cy="20.5" r="4" fill="#FFFFFF"/><circle cx="10.5" cy="20.5" r="2.6" fill="#1A5A90"/><circle cx="10.5" cy="20.5" r="1.6" fill="#FFFFFF"/></svg><svg class="a" style="left:271px;top:1047px;" width="30" height="28" viewBox="0 0 30 28"><rect x="22" y="2" width="4" height="23" fill="#CFE8F8" stroke="#7FB8E0" stroke-width="0.8"/><rect x="19" y="1" width="4" height="24" fill="#BFE0F6" stroke="#7FB8E0" stroke-width="0.8"/><rect x="1" y="0.5" width="21" height="25" fill="#A8D6F2" stroke="#6AAAD8"/><circle cx="11" cy="13" r="8.5" fill="#F07A14"/><circle cx="11" cy="13" r="7" fill="#F59A38"/><path d="M8.5 8V18L16.5 13Z" fill="#FFFFFF"/></svg><div class="a" style="left:312px;top:1040px;width:47px;height:38px;background:#FFFFFF;box-shadow:inset 1px 1px 0 #404040,inset 2px 2px 0 #808080,inset -1px -1px 0 #FFFFFF"></div><svg class="a" style="left:320px;top:1043px;" width="32" height="32" viewBox="0 0 32 32"><path d="M0 23.5L24 25.5V0L32 3V28.5L24 32Z" fill="#8661C5"/><path fill-rule="evenodd" fill="#8661C5" d="M2 8L10 13L15.6 4.6L19.7 6.5V21L15.6 22.7L10 14.5L2 18.6Z M4.6 11.2L8 13.6L4.6 15.8Z M15.6 9.5L12 13.6L15.6 18Z"/></svg><div class="a" style="left:362px;top:1040px;width:44px;height:38px;background:#D4D0C8;box-shadow:inset 1px 1px 0 #FFFFFF,inset -1px -1px 0 #404040,inset -2px -2px 0 #808080"></div><div class="a" style="left:406px;top:1040px;width:4px;height:38px;background:#D4D0C8;box-shadow:inset 1px 0 0 #FFFFFF,inset -1px 0 0 #404040"></div><svg class="a" style="left:366px;top:1043px;" width="34" height="33" viewBox="0 0 34 33"><defs><linearGradient id="npg" x1="0" y1="0" x2="0.3" y2="1"><stop offset="0" stop-color="#C8F0FA"/><stop offset="0.5" stop-color="#6CC8E0"/><stop offset="1" stop-color="#2A9CC0"/></linearGradient></defs><path d="M28 5L32 28L25 31Z" fill="#B08830"/><path d="M26 4L30 28L24 31L22 30Z" fill="#F0F6FA" stroke="#A0B8C8" stroke-width="0.6"/><path d="M14 2L29 5L24 30L2 22Z" fill="url(#npg)" stroke="#4AA0C0" stroke-width="0.6"/><path d="M14 2.5L29 5.5" stroke="#505050" stroke-width="2" stroke-dasharray="1 1"/></svg><div class="t" style="left:1688px;top:1051px;color:#000000;font-size:11px;font-weight:normal;font-family:'Liberation Sans', sans-serif;">EN</div><div class="a" style="left:1708px;top:1046px;width:1px;height:22px;background:#808080;"></div><div class="a" style="left:1709px;top:1046px;width:1px;height:22px;background:#FFFFFF;"></div><div class="a" style="left:1712px;top:1040px;width:206px;height:38px;box-shadow:inset 1px 1px 0 #808080,inset -1px -1px 0 #FFFFFF"></div><svg class="a" style="left:1718px;top:1052px;" width="7" height="10" viewBox="0 0 7 10"><path d="M0.8 4.5L3.5 1.5L6.2 4.5M0.8 8.5L3.5 5.5L6.2 8.5" stroke="#000000" stroke-width="1.5" fill="none"/></svg><svg class="a" style="left:1734px;top:1050px;" width="18" height="18" viewBox="0 0 18 18"><path d="M2.5 1.5V16.5" stroke="#505050" stroke-width="2.6" stroke-linecap="round"/><path d="M2.5 1.5V16.5" stroke="#FFFFFF" stroke-width="1"/><path d="M3.5 2H9.5Q11 2 11 3.5V5H15.5L14 7L15.5 9.5H3.5Z" fill="#F4F4F4" stroke="#6A6A6A" stroke-width="0.8"/><circle cx="12" cy="12" r="4.6" fill="#D81E1E"/><path d="M10 10L14 14M14 10L10 14" stroke="#FFFFFF" stroke-width="1.5"/></svg><svg class="a" style="left:1762px;top:1051px;" width="11" height="16" viewBox="0 0 11 16"><rect x="0.8" y="1.3" width="9.4" height="14" rx="2" fill="#FFFFFF" stroke="#505050" stroke-width="1.3"/><rect x="3" y="4" width="5" height="4.5" fill="#8C8C8C"/><rect x="3" y="8.5" width="5" height="4.5" fill="#FFFFFF" stroke="#B0B0B0" stroke-width="0.5"/></svg><svg class="a" style="left:1782px;top:1050px;" width="18" height="18" viewBox="0 0 18 18"><path d="M1.5 1V5.5Q1.5 7.5 4 7.5Q6.5 7.5 6.5 5.5V1" stroke="#505050" stroke-width="1.3" fill="none"/><path d="M4 7.5V17" stroke="#505050" stroke-width="1.3"/><rect x="5.5" y="3.5" width="11" height="10" fill="#FFFFFF" stroke="#505050" stroke-width="1.1"/><rect x="7" y="5" width="8" height="7" fill="#959590"/><path d="M7 15.5H15" stroke="#505050" stroke-width="1.5"/></svg><svg class="a" style="left:1806px;top:1050px;" width="17" height="18" viewBox="0 0 17 18"><path d="M1 6H4L9.5 1V17L4 12H1Z" fill="#FFFFFF" stroke="#606060" stroke-width="1.1" stroke-linejoin="round"/><path d="M11.5 6Q13.5 9 11.5 12M13.5 4Q16.5 9 13.5 14" stroke="#707070" stroke-width="1.1" fill="none"/></svg><div class="t" style="left:1854px;top:1045px;color:#000000;font-size:11px;font-weight:normal;font-family:'Liberation Sans', sans-serif;">1:48</div><div class="t" style="left:1837px;top:1061px;color:#000000;font-size:11px;font-weight:normal;font-family:'Liberation Sans', sans-serif;">19.08.2018</div><svg class="a" style="left:1900px;top:1053px;" width="16" height="13" viewBox="0 0 16 13"><rect x="0" y="0" width="16" height="13" fill="#2C6DC4"/><rect x="0" y="9" width="16" height="3" fill="#1A3C6E"/><rect x="1" y="10" width="3" height="2" fill="#6FCF6F"/></svg></body></html>
